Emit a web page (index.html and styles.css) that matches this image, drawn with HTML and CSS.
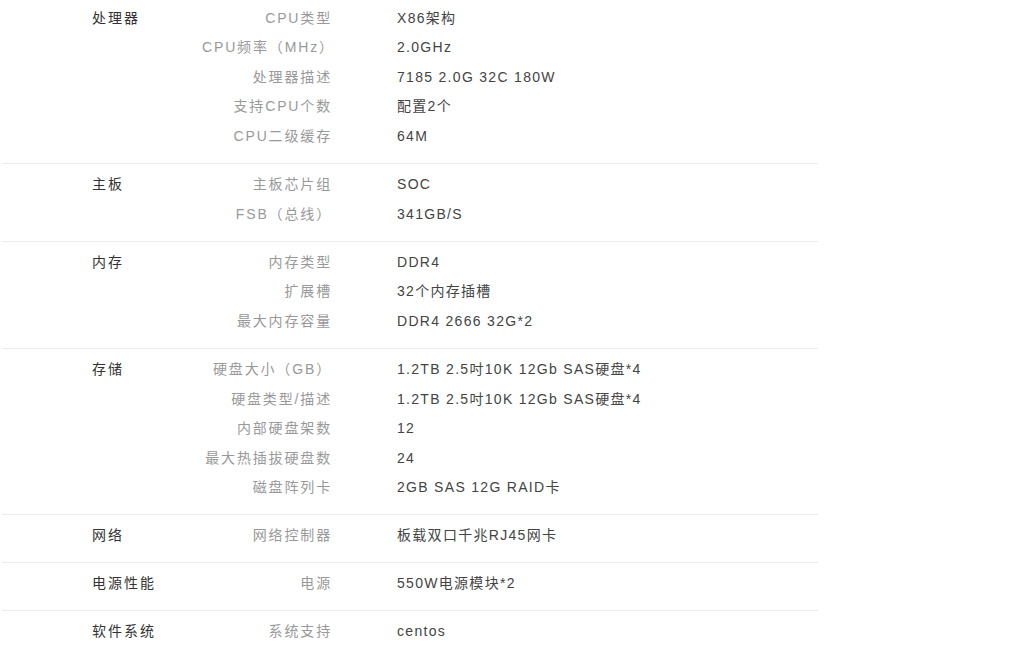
FILE: index.html
```html
<!DOCTYPE html>
<html lang="zh-CN">
<head>
<meta charset="utf-8">
<title>规格参数</title>
<link rel="stylesheet" href="styles.css">
</head>
<body>
<div class="spec">
  <div class="group first">
    <div class="cat">处理器</div>
    <div class="items">
      <div class="item"><span class="label">CPU类型</span><span class="value">X86架构</span></div>
      <div class="item"><span class="label">CPU频率（MHz）</span><span class="value">2.0GHz</span></div>
      <div class="item"><span class="label">处理器描述</span><span class="value">7185 2.0G 32C 180W</span></div>
      <div class="item"><span class="label">支持CPU个数</span><span class="value">配置2个</span></div>
      <div class="item"><span class="label">CPU二级缓存</span><span class="value">64M</span></div>
    </div>
  </div>
  <div class="group">
    <div class="cat">主板</div>
    <div class="items">
      <div class="item"><span class="label">主板芯片组</span><span class="value">SOC</span></div>
      <div class="item"><span class="label">FSB（总线）</span><span class="value">341GB/S</span></div>
    </div>
  </div>
  <div class="group">
    <div class="cat">内存</div>
    <div class="items">
      <div class="item"><span class="label">内存类型</span><span class="value">DDR4</span></div>
      <div class="item"><span class="label">扩展槽</span><span class="value">32个内存插槽</span></div>
      <div class="item"><span class="label">最大内存容量</span><span class="value">DDR4 2666 32G*2</span></div>
    </div>
  </div>
  <div class="group">
    <div class="cat">存储</div>
    <div class="items">
      <div class="item"><span class="label">硬盘大小（GB）</span><span class="value">1.2TB 2.5吋10K 12Gb SAS硬盘*4</span></div>
      <div class="item"><span class="label">硬盘类型/描述</span><span class="value">1.2TB 2.5吋10K 12Gb SAS硬盘*4</span></div>
      <div class="item"><span class="label">内部硬盘架数</span><span class="value">12</span></div>
      <div class="item"><span class="label">最大热插拔硬盘数</span><span class="value">24</span></div>
      <div class="item"><span class="label">磁盘阵列卡</span><span class="value">2GB SAS 12G RAID卡</span></div>
    </div>
  </div>
  <div class="group">
    <div class="cat">网络</div>
    <div class="items">
      <div class="item"><span class="label">网络控制器</span><span class="value">板载双口千兆RJ45网卡</span></div>
    </div>
  </div>
  <div class="group">
    <div class="cat">电源性能</div>
    <div class="items">
      <div class="item"><span class="label">电源</span><span class="value">550W电源模块*2</span></div>
    </div>
  </div>
  <div class="group">
    <div class="cat">软件系统</div>
    <div class="items">
      <div class="item"><span class="label">系统支持</span><span class="value">centos</span></div>
    </div>
  </div>
</div>
</body>
</html>
```

FILE: styles.css
```css
html, body {
  margin: 0;
  padding: 0;
  background: #ffffff;
}

body {
  font-family: "Liberation Sans", "Noto Sans CJK SC", sans-serif;
  font-size: 14px;
  color: #333333;
}

.spec {
  width: 816px;
  margin-left: 2px;
}

.group {
  display: flex;
  border-top: 1px solid #ececec;
  padding: 6.25px 0 11.35px;
  line-height: 29.5px;
}

.group.first {
  border-top: 0;
  padding-top: 3.5px;
  padding-bottom: 12.1px;
}

.cat {
  width: 200px;
  padding-left: 90px;
  box-sizing: border-box;
  color: #333333;
  letter-spacing: 2px;
}

.items {
  display: flex;
  flex-direction: column;
}

.item {
  display: flex;
}

.label {
  width: 130px;
  text-align: right;
  color: #999999;
  letter-spacing: 1.85px;
}

.value {
  margin-left: 65px;
  color: #444444;
  letter-spacing: 1.3px;
}
```
